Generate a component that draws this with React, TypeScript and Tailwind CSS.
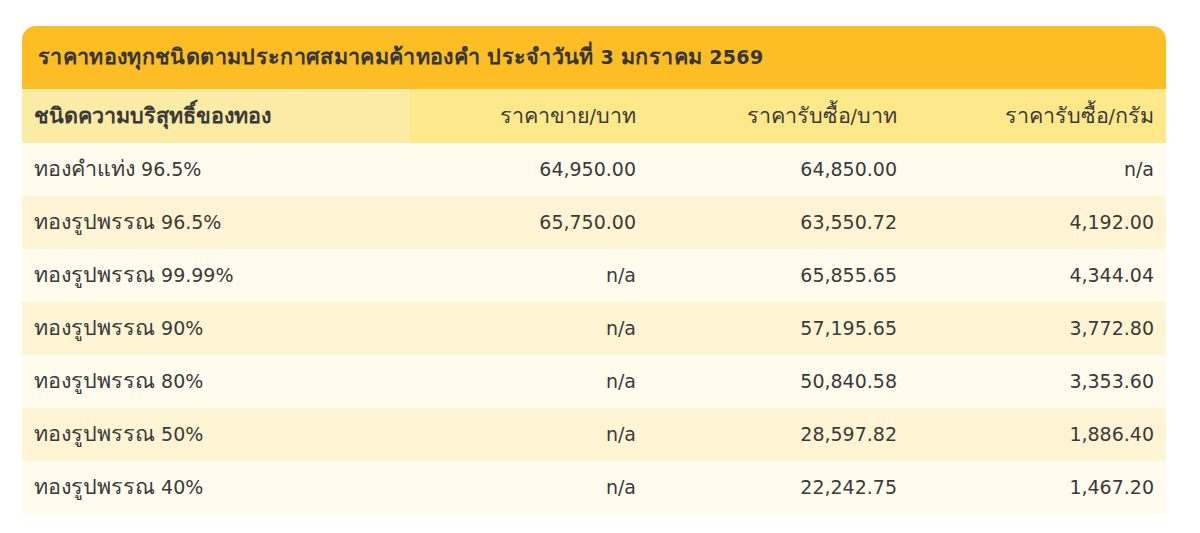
import React from 'react';

const ROWS: [string, string, string, string][] = [
  ['ทองคำแท่ง 96.5%', '64,950.00', '64,850.00', 'n/a'],
  ['ทองรูปพรรณ 96.5%', '65,750.00', '63,550.72', '4,192.00'],
  ['ทองรูปพรรณ 99.99%', 'n/a', '65,855.65', '4,344.04'],
  ['ทองรูปพรรณ 90%', 'n/a', '57,195.65', '3,772.80'],
  ['ทองรูปพรรณ 80%', 'n/a', '50,840.58', '3,353.60'],
  ['ทองรูปพรรณ 50%', 'n/a', '28,597.82', '1,886.40'],
  ['ทองรูปพรรณ 40%', 'n/a', '22,242.75', '1,467.20'],
];

const font = "font-['Tahoma','DejaVu_Sans','Noto_Sans',sans-serif]";

// Thai glyphs fall back to a smaller face, so bump Thai runs a little
function T({ text }: { text: string }) {
  return (
    <span className="whitespace-pre">
      {text.split(/([\u0E00-\u0E7F]+)/).map((part, i) =>
        /[\u0E00-\u0E7F]/.test(part) ? (
          <span key={i} className="text-[21.5px]">{part}</span>
        ) : (
          part
        )
      )}
    </span>
  );
}

export default function App() {
  return (
    <div className={`w-[1200px] h-[533px] bg-white pt-[26px] pl-[22px] ${font} text-[19px] text-[#3a3a3a]`}>
      <div className="w-[1144px] rounded-t-[14px] overflow-hidden">
        <div className="h-[63px] bg-[#fcbd25] flex items-center pl-[16px] font-semibold tracking-[0.35px] text-[#363636]">
          <T text="ราคาทองทุกชนิดตามประกาศสมาคมค้าทองคำ ประจำวันที่ 3 มกราคม 2569" />
        </div>
        <div className="grid grid-cols-[388px_240px_260px_256px]">
          <div className="h-[54px] bg-[#faeca5] flex items-center pl-[12px] font-bold">
            <T text="ชนิดความบริสุทธิ์ของทอง" />
          </div>
          <div className="h-[54px] bg-[#fde98a] flex items-center justify-end pr-[14px] font-medium">
            <T text="ราคาขาย/บาท" />
          </div>
          <div className="h-[54px] bg-[#fde98a] flex items-center justify-end pr-[13px] font-medium">
            <T text="ราคารับซื้อ/บาท" />
          </div>
          <div className="h-[54px] bg-[#fde98a] flex items-center justify-end pr-[12px] font-medium">
            <T text="ราคารับซื้อ/กรัม" />
          </div>
          {ROWS.map((r, i) => {
            const bg = i % 2 === 0 ? 'bg-[#fffcee]' : 'bg-[#fff5d4]';
            return (
              <React.Fragment key={i}>
                <div className={`h-[53px] ${bg} flex items-center pl-[12px]`}>
                  <T text={r[0]} />
                </div>
                <div className={`h-[53px] ${bg} flex items-center justify-end pr-[14px]`}>{r[1]}</div>
                <div className={`h-[53px] ${bg} flex items-center justify-end pr-[13px]`}>{r[2]}</div>
                <div className={`h-[53px] ${bg} flex items-center justify-end pr-[12px]`}>{r[3]}</div>
              </React.Fragment>
            );
          })}
        </div>
      </div>
    </div>
  );
}
